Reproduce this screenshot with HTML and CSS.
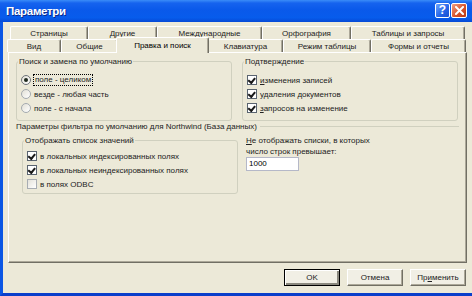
FILE: index.html
```html
<!DOCTYPE html>
<html lang="ru">
<head>
<meta charset="utf-8">
<title>Параметри</title>
<link rel="stylesheet" href="styles.css">
</head>
<body>
<div class="window">
  <div class="titlebar">
    <span class="title">Параметри</span>
    <div class="tb-buttons">
      <span class="tb-btn help">?</span>
      <span class="tb-btn close"><svg width="9" height="9" viewBox="0 0 9 9"><path d="M1 1L8 8M8 1L1 8" stroke="#fff" stroke-width="2" stroke-linecap="square"/></svg></span>
    </div>
  </div>
  <div class="client">
    <div class="tabs">
      <div class="tabrow back">
        <div class="tab">Страницы</div>
        <div class="tab">Другие</div>
        <div class="tab">Международные</div>
        <div class="tab">Орфография</div>
        <div class="tab">Таблицы и запросы</div>
      </div>
      <div class="tabrow front">
        <div class="tab">Вид</div>
        <div class="tab">Общие</div>
        <div class="tab selected">Правка и поиск</div>
        <div class="tab">Клавиатура</div>
        <div class="tab">Режим таблицы</div>
        <div class="tab">Формы и отчеты</div>
      </div>
    </div>
    <div class="panel">
      <div class="top-groups">
        <fieldset class="group">
          <legend>Поиск и замена по умолчанию</legend>
          <div class="rows top-rows">
            <div class="row"><span class="radio on"></span><span class="focus">поле - целиком</span></div>
            <div class="row"><span class="radio"></span><span>везде - любая часть</span></div>
            <div class="row"><span class="radio"></span><span>поле - с начала</span></div>
          </div>
        </fieldset>
        <fieldset class="group">
          <legend>Подтверждение</legend>
          <div class="rows top-rows">
            <div class="row"><span class="check on"></span><span><u>и</u>зменения записей</span></div>
            <div class="row"><span class="check on"></span><span>удаления документов</span></div>
            <div class="row"><span class="check on"></span><span><u>з</u>апросов на изменение</span></div>
          </div>
        </fieldset>
      </div>
      <div class="filter-title">Параметры фильтра по умолчанию для Northwind (База данных)</div>
      <div class="filter-body">
        <fieldset class="group lists">
          <legend>Отображать список значений</legend>
          <div class="rows list-rows">
            <div class="row"><span class="check on"></span><span>в локальных индексированных полях</span></div>
            <div class="row"><span class="check on"></span><span>в локальных неиндексированных полях</span></div>
            <div class="row"><span class="check off"></span><span>в полях ODBC</span></div>
          </div>
        </fieldset>
        <div class="limit">
          <div class="limit-label"><u>Н</u>е отображать списки, в которых<br>число строк превышает:</div>
          <div class="field">1000</div>
        </div>
      </div>
    </div>
    <div class="buttons">
      <span class="btn default">OK</span>
      <span class="btn">Отмена</span>
      <span class="btn">Пр<u>и</u>менить</span>
    </div>
  </div>
</div>
</body>
</html>
```
FILE: styles.css
```css
* { box-sizing: border-box; }
html, body { margin: 0; padding: 0; }
body {
  width: 472px;
  height: 296px;
  overflow: hidden;
  background: #ECE9D8;
  font-family: "Liberation Sans", Arial, sans-serif;
  font-size: 8px;
  color: #000;
}
.window { display: flex; flex-direction: column; height: 296px; }
.titlebar {
  height: 22px;
  flex: none;
  display: flex;
  align-items: center;
  padding: 0 5px 0 6px;
  background: linear-gradient(#3A8CF8 0%, #1663EE 14%, #0A59EA 45%, #075CEC 80%, #064AD6 100%);
}
.title {
  flex: 1;
  color: #fff;
  font-weight: bold;
  font-size: 11.5px;
  letter-spacing: -0.3px;
  text-shadow: 1px 1px #0A2A8C;
}
.tb-buttons { display: flex; gap: 1px; margin-top: -1px; }
.tb-btn {
  width: 15px;
  height: 15px;
  border: 1px solid #fff;
  border-radius: 2px;
  display: flex;
  align-items: center;
  justify-content: center;
}
.help {
  background: linear-gradient(135deg, #6CA4FF, #2463E6 60%, #1A4FD0);
  color: #fff;
  font-weight: bold;
  font-size: 12px;
  line-height: 13px;
}
.close { width: 16px; background: linear-gradient(135deg, #F0A084, #D8542C 55%, #B83A14); }

.client {
  flex: 1;
  display: flex;
  flex-direction: column;
  border-left: 3px solid #0B56E4;
  border-bottom: 3px solid #0A3ECB;
}
.tabs { padding-top: 4px; }
.tabrow { display: grid; height: 13px; }
.back { margin-left: 7px; grid-template-columns: 78px 69px 105px 89px 114px; }
.front { margin-left: 4px; grid-template-columns: 54px 57px 90px 75px 88px 95px; }
.tab {
  display: flex;
  align-items: center;
  justify-content: center;
  white-space: nowrap;
  background: #ECE9D8;
  border-top: 1px solid #fff;
  border-left: 1px solid #fff;
  border-right: 1px solid #716F64;
  box-shadow: inset -1px 0 #ACA899;
  border-radius: 2px 2px 0 0;
  color: #222;
}
.tab.selected {
  position: relative;
  z-index: 1;
  margin: -2px -1px -1px -2px;
  color: #000;
}

.panel {
  margin: 0 5px;
  height: 211px;
  flex: none;
  border: 1px solid;
  border-color: #fff #716F64 #716F64 #fff;
  box-shadow: inset -1px -1px #ACA899;
  padding: 3px 7px 0 7px;
}
.top-groups { display: grid; grid-template-columns: 216px 216px; gap: 10px; }
.group {
  margin: 0;
  min-width: 0;
  padding: 0 4px 5px 4px;
  border: 1px solid #D0D0BF;
  border-radius: 3px;
}
.group legend {
  padding: 0 1px;
  margin-left: -3px;
  line-height: 11px;
  color: #222;
}
.rows { display: flex; flex-direction: column; }
.top-rows { padding-top: 6px; }
.row { height: 14px; display: flex; align-items: center; gap: 3px; white-space: nowrap; color: #222; }
.radio {
  width: 10px;
  height: 10px;
  flex: none;
  border-radius: 50%;
  border: 1px solid #A4AAB0;
  background: linear-gradient(135deg, #E2E0D6, #fff);
  display: flex;
  align-items: center;
  justify-content: center;
}
.radio.on { border-color: #6E747A; }
.radio.on::after {
  content: "";
  width: 4px;
  height: 4px;
  border-radius: 50%;
  background: #1E2A1E;
}
.focus { outline: 1px dotted #000; padding: 0 1px; line-height: 10px; }
.check {
  width: 10px;
  height: 10px;
  flex: none;
  border: 1px solid #5A6470;
  background: #fff;
  display: flex;
  align-items: center;
  justify-content: center;
}
.check.on::after {
  content: "";
  width: 5px;
  height: 3px;
  border-left: 2px solid #1A1A1A;
  border-bottom: 2px solid #1A1A1A;
  transform: rotate(-50deg) translate(0, -1px);
}
.check.off { border-color: #A8ADB3; background: linear-gradient(135deg, #E4E2DA, #fff); }

.filter-title {
  display: flex;
  align-items: center;
  gap: 3px;
  line-height: 11px;
  white-space: nowrap;
  color: #222;
}
.filter-title::after { content: ""; flex: 1; border-top: 1px solid #D0D0BF; }
.filter-body { display: flex; gap: 8px; padding-left: 6px; margin-top: 3px; }
.lists { width: 216px; padding-bottom: 2px; }
.list-rows { padding-top: 3px; }
.limit { display: flex; flex-direction: column; }
.limit-label { line-height: 11px; color: #222; }
.field {
  width: 53px;
  height: 14px;
  border: 1px solid #B5B8C8;
  background: #fff;
  padding: 0 2px;
  line-height: 12px;
}

.buttons {
  display: flex;
  justify-content: flex-end;
  gap: 7px;
  margin-top: 6px;
  padding-right: 6px;
}
.btn {
  width: 56px;
  height: 17px;
  display: flex;
  align-items: center;
  justify-content: center;
  border: 1px solid;
  border-color: #fff #716F64 #716F64 #fff;
  box-shadow: inset -1px -1px #ACA899;
  background: #F1EFE5;
  color: #222;
}
.btn.default {
  border-color: #000;
  box-shadow: inset 1px 1px #fff, inset -2px -2px #8A887E;
}
```
